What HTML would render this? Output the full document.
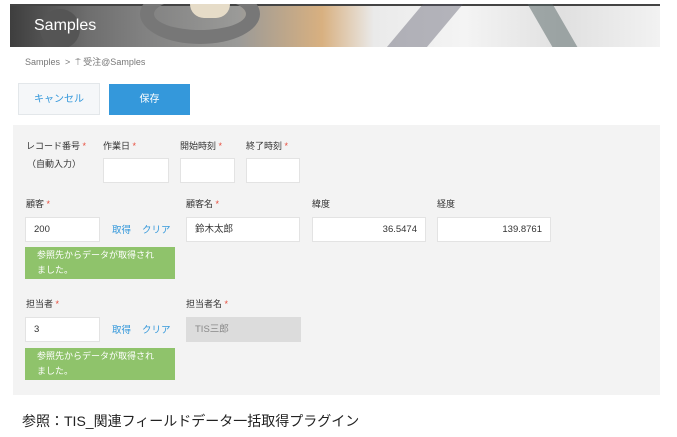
<html><head><style>
body{margin:0;width:677px;height:437px;background:#fff;font-family:"Liberation Sans","Noto Sans CJK JP",sans-serif;position:relative;overflow:hidden}
.a{position:absolute}
.lbl{font-size:9px;color:#333}
.req{color:#e74c3c}
.in{position:absolute;background:#fff;border:1px solid #e3e3e3;box-sizing:border-box;font-size:9.5px;color:#333;padding:0 8px;line-height:23px}
.lnk{font-size:9.5px;color:#3498db}
.ok{position:absolute;background:#8fc36b;color:#fff;font-size:9px;line-height:15px;padding:1px 12px;box-sizing:border-box;width:150px;height:32px}
</style></head><body>
<div class="a" style="left:10px;top:4px;width:650px;height:43px;overflow:hidden;background:linear-gradient(90deg,#3e3e3e 0%,#6e6e6e 12%,#808080 20%,#9a9a98 35%,#d8b080 48%,#eaeaea 56%,#f4f4f4 70%,#e0e0e0 85%,#f2f2f2 100%)">
<div class="a" style="left:0;top:0;width:650px;height:2px;background:#444"></div>
<div class="a" style="left:30px;top:5px;width:40px;height:40px;border-radius:50%;background:#555"></div>
<div class="a" style="left:130px;top:-20px;width:120px;height:60px;border-radius:50%;border:14px solid #777;box-sizing:border-box"></div>
<div class="a" style="left:180px;top:0;width:40px;height:14px;background:#e6dcc8;border-radius:0 0 20px 20px"></div>
<div class="a" style="left:395px;top:0;width:40px;height:43px;background:#556;opacity:.4;transform:skewX(-40deg)"></div>
<div class="a" style="left:530px;top:0;width:25px;height:43px;background:#566;opacity:.5;transform:skewX(30deg)"></div>
<div class="a" style="left:24px;top:13px;font-size:16px;color:#fff">Samples</div>
</div>
<div class="a" style="left:25px;top:55px;font-size:9px;color:#777">Samples &nbsp;&gt;&nbsp; ⍑ 受注@Samples</div>
<div class="a" style="left:18px;top:83px;width:82px;height:32px;background:#f5f7f9;border:1px solid #e3e7ea;box-sizing:border-box;color:#3498db;font-size:10px;text-align:center;line-height:32px">キャンセル</div>
<div class="a" style="left:109px;top:84px;width:81px;height:31px;background:#3498db;color:#fff;font-size:10px;text-align:center;line-height:31px">保存</div>
<div class="a" style="left:13px;top:125px;width:647px;height:270px;background:#f3f3f3"></div>
<div class="a lbl" style="left:26px;top:139px">レコード番号 <span class="req">*</span></div>
<div class="a lbl" style="left:27px;top:157px">（自動入力）</div>
<div class="a lbl" style="left:103px;top:139px">作業日 <span class="req">*</span></div>
<div class="a lbl" style="left:180px;top:139px">開始時刻 <span class="req">*</span></div>
<div class="a lbl" style="left:246px;top:139px">終了時刻 <span class="req">*</span></div>
<div class="in" style="left:103px;top:158px;width:66px;height:25px"></div>
<div class="in" style="left:180px;top:158px;width:55px;height:25px"></div>
<div class="in" style="left:246px;top:158px;width:54px;height:25px"></div>
<div class="a lbl" style="left:26px;top:197px">顧客 <span class="req">*</span></div>
<div class="a lbl" style="left:186px;top:197px">顧客名 <span class="req">*</span></div>
<div class="a lbl" style="left:312px;top:197px">緯度</div>
<div class="a lbl" style="left:437px;top:197px">経度</div>
<div class="in" style="left:25px;top:217px;width:75px;height:25px">200</div>
<div class="a lnk" style="left:112px;top:222px">取得</div>
<div class="a lnk" style="left:142px;top:222px">クリア</div>
<div class="in" style="left:186px;top:217px;width:114px;height:25px">鈴木太郎</div>
<div class="in" style="left:312px;top:217px;width:114px;height:25px;text-align:right">36.5474</div>
<div class="in" style="left:437px;top:217px;width:114px;height:25px;text-align:right">139.8761</div>
<div class="ok" style="left:25px;top:247px">参照先からデータが取得され<br>ました。</div>
<div class="a lbl" style="left:26px;top:297px">担当者 <span class="req">*</span></div>
<div class="a lbl" style="left:186px;top:297px">担当者名 <span class="req">*</span></div>
<div class="in" style="left:25px;top:317px;width:75px;height:25px">3</div>
<div class="a lnk" style="left:112px;top:322px">取得</div>
<div class="a lnk" style="left:142px;top:322px">クリア</div>
<div class="in" style="left:186px;top:317px;width:115px;height:25px;background:#dcdcdc;border-color:#dcdcdc;color:#888">TIS三郎</div>
<div class="ok" style="left:25px;top:348px">参照先からデータが取得され<br>ました。</div>
<div class="a" style="left:22px;top:411px;font-size:14px;color:#222">参照：TIS_関連フィールドデータ一括取得プラグイン</div>
</body></html>
